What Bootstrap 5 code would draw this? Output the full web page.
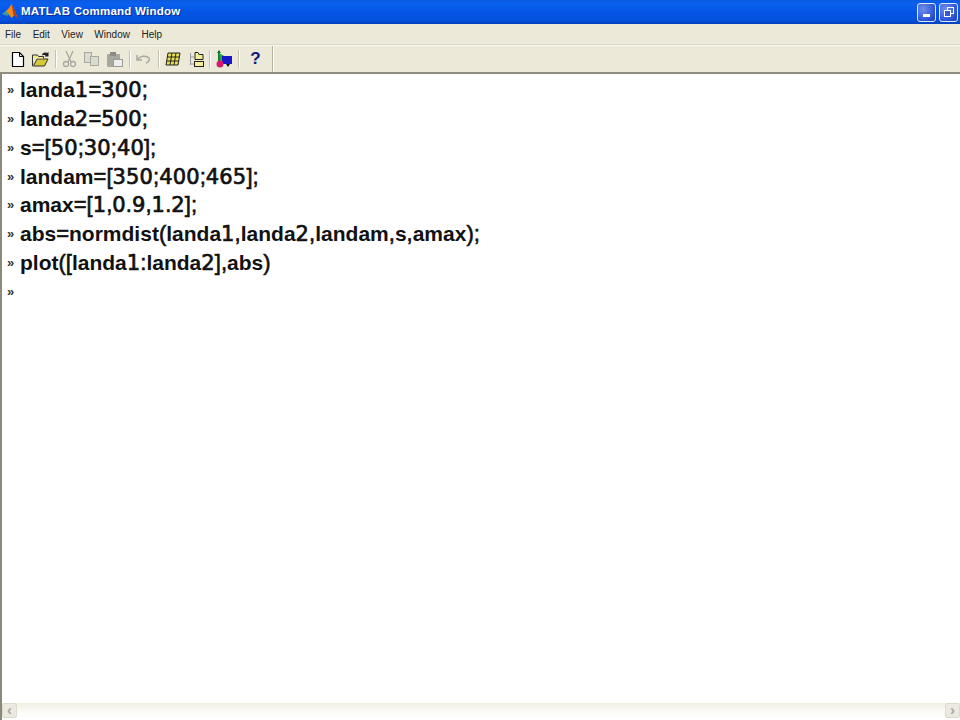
<!DOCTYPE html>
<html lang="en"><head><meta charset="utf-8"><title>MATLAB Command Window</title>
<link href="https://cdn.jsdelivr.net/npm/bootstrap@5.3.0/dist/css/bootstrap.min.css" rel="stylesheet">
<style>
html,body{height:720px;overflow:hidden;background:#fff;font-family:"Liberation Sans",Arial,sans-serif}
.win{height:720px;width:960px}
.titlebar{height:24px;flex:none;background:linear-gradient(180deg,#0a5ae0 0,#0a60ee 15%,#0455e6 50%,#0450dc 85%,#0340b8 100%);padding:0 2px 0 2px}
.titletext{font-size:11.5px;font-weight:700;color:#fff;letter-spacing:.25px;margin-left:3px;text-shadow:1px 1px 0 #0a2f90}
.capbtn{width:19px;height:19px;border:1px solid #dfe8fb;border-radius:3px;background:radial-gradient(circle at 30% 30%,#6f8fe8,#2a50d8 70%,#1c3cc0);margin-left:3px}
.menubar{height:20px;flex:none;background:#ece9d8;font-size:10px;color:#222;padding-left:5px}
.menubar span{margin-right:11.500px}
.sep-line{height:2px;flex:none;background:#fbfaf3;border-top:1px solid #d8d5c4}
.toolbar{height:28px;flex:none;background:#ece9d8;border-bottom:2px solid #8f8d80}
.tb-end{height:26px;border-right:1px solid #b5b3a4;box-shadow:1px 0 0 #fff;width:273px;padding-left:9px}
.ic{width:19px;height:20px;display:block;flex:none}
.ml3{margin-left:3px}
.ml5{margin-left:5px}
.tb-sep{width:1px;height:18px;background:#c4c2b2;box-shadow:1px 0 0 #fff;margin:0 4px 0 5px;flex:none}
.tb-sep.tight{margin-left:3px}
.help-q{color:#0a1a80;font:700 17px/20px "Liberation Sans",sans-serif;text-align:center;margin-left:3px}
.lower{flex:1;min-height:0;border-left:2px solid #8b897c}
.console{flex:1;padding-left:5px;min-height:0}
.cl{height:28.85px;line-height:29px;font-size:21px;font-weight:700;color:#111;white-space:nowrap;display:flex}
.cl:first-child{margin-top:1px}
.pr{width:13px;font-size:13px;font-weight:700;flex:none;color:#333}
.dg{font-family:"DejaVu Sans",sans-serif;font-size:21px;font-weight:400;letter-spacing:.15px;-webkit-text-stroke:.7px #111}
.pn{font-size:22px;font-weight:400;-webkit-text-stroke:.6px #111}
.hscroll{height:15px;background:linear-gradient(180deg,#f1f0e6,#fbfbf6 60%,#fff);flex:none;margin-bottom:2px}
.sbtn{width:15px;background:#eceae0;border:1px solid #dcdacd;border-radius:2px;color:#a9a89d;font-size:15px;line-height:11px;text-align:center;font-weight:700}
</style></head>
<body>
<div class="win d-flex flex-column">
 <div class="titlebar d-flex align-items-center">
  <svg width="16" height="16" viewBox="0 0 16 16"><path d="M0 10l4-3 3-3 2.500-4 3 6 3 8-3-3-3 3-2.500-3-3-2z" fill="#f08a1e"/><path d="M0 10l4-3 2 2 1.500 2-2 0 0 1-3-1z" fill="#3c9a9a"/><path d="M9.500 0l3 6 3 8-4-3z" fill="#b83c14"/></svg>
  <span class="titletext">MATLAB Command Window</span>
  <div class="ms-auto d-flex">
   <div class="capbtn d-flex align-items-end justify-content-center pb-1"><svg width="8" height="3"><rect width="7" height="3" fill="#fff"/></svg></div>
   <div class="capbtn d-flex align-items-center justify-content-center"><svg width="12" height="12" fill="none" stroke="#fff"><rect x="4.500" y="1.500" width="6" height="6"/><rect x="1.500" y="4.500" width="6" height="6" fill="#3458d8"/></svg></div>
  </div>
 </div>
 <div class="menubar d-flex align-items-center"><span>File</span><span>Edit</span><span>View</span><span>Window</span><span>Help</span></div>
 <div class="sep-line"></div>
 <div class="toolbar d-flex align-items-center">
  <div class="tb-end d-flex align-items-center">
   <svg class="ic" viewBox="0 0 19 20"><path d="M3.500 3.500h7l4 4v10h-11z" fill="#fff" stroke="#000" stroke-width="1.200"/><path d="M10.500 3.500v4h4" fill="none" stroke="#000"/></svg>
   <svg class="ic ml3" viewBox="0 0 19 20"><path d="M1.500 8v9h12l3.500-7H6l-3 6" fill="#d8c838" stroke="#333"/><path d="M1.500 9V6h5l1 1.500h5v2" fill="#f2e890" stroke="#333"/><path d="M11 6c1-2.500 3-3 5-2l1.500-1v4.500h-4l1-1c-1-.6-2-.6-3 0z" fill="#222"/></svg>
   <span class="tb-sep"></span>
   <svg class="ic" viewBox="0 0 19 20" fill="none" stroke="#a8a8a0" stroke-width="1.300"><path d="M6 2l5 11M13 2L8 13"/><circle cx="6" cy="15" r="2.500"/><circle cx="13" cy="15" r="2.500"/></svg>
   <svg class="ic ml3" viewBox="0 0 19 20" fill="#dcdbd0" stroke="#a8a8a0"><rect x="2.500" y="3.500" width="7" height="10"/><rect x="8.500" y="7.500" width="8" height="9"/></svg>
   <svg class="ic ms-1" viewBox="0 0 19 20"><rect x="2" y="5" width="13" height="13" rx="1" fill="#a8a8a0"/><rect x="5" y="3" width="6" height="4" fill="#8c8c86"/><rect x="8.500" y="10.500" width="9" height="7" fill="#eee" stroke="#9a9a92"/></svg>
   <span class="tb-sep"></span>
   <svg class="ic" viewBox="0 0 19 20" fill="none" stroke="#a8a8a0" stroke-width="1.500"><path d="M3 6v5h5M3.500 10.500C6 7 12 6 15 9c1 1.500 0 4-3 5"/></svg>
   <span class="tb-sep"></span>
   <svg class="ic" viewBox="0 0 19 20"><path d="M5 4h12l-2 12H3z" fill="#e8e050" stroke="#222"/><path d="M4.300 8h12M3.700 12h12M9 4L7 16M13 4l-2 12" stroke="#222"/></svg>
   <svg class="ic ml5" viewBox="0 0 19 20"><path d="M3.500 4v12M3.500 8H7M3.500 15H7" fill="none" stroke="#999"/><path d="M8 3.500h3l1 2h4v5H8z" fill="#f4ee9c" stroke="#222"/><rect x="7.500" y="12.500" width="9" height="5" fill="#f4ee9c" stroke="#222"/></svg>
   <span class="tb-sep tight"></span>
   <svg class="ic" viewBox="0 0 19 20"><path d="M5 2v10" stroke="#0a7a2a" stroke-width="2"/><path d="M3 4l2-3 2 3z" fill="#0a7a2a"/><path d="M5 4l7 4-6 5z" fill="#2aa040"/><rect x="8" y="7" width="10" height="8" fill="#1818c8"/><circle cx="6" cy="15" r="3.500" fill="#d81870"/><path d="M12 15h4l-2 3z" fill="#111"/></svg>
   <span class="tb-sep"></span>
   <span class="ic help-q">?</span>
  </div>
 </div>
 <div class="lower d-flex flex-column">
 <div class="console">
  <div class="cl"><span class="pr">»</span><span>landa<span class="dg">1</span><span class="pn">=</span><span class="dg">300</span><span class="pn">;</span></span></div>
  <div class="cl"><span class="pr">»</span><span>landa<span class="dg">2</span><span class="pn">=</span><span class="dg">500</span><span class="pn">;</span></span></div>
  <div class="cl"><span class="pr">»</span><span>s<span class="pn">=[</span><span class="dg">50</span><span class="pn">;</span><span class="dg">30</span><span class="pn">;</span><span class="dg">40</span><span class="pn">];</span></span></div>
  <div class="cl"><span class="pr">»</span><span>landam<span class="pn">=[</span><span class="dg">350</span><span class="pn">;</span><span class="dg">400</span><span class="pn">;</span><span class="dg">465</span><span class="pn">];</span></span></div>
  <div class="cl"><span class="pr">»</span><span>amax<span class="pn">=[</span><span class="dg">1</span><span class="pn">,</span><span class="dg">0</span><span class="pn">.</span><span class="dg">9</span><span class="pn">,</span><span class="dg">1</span><span class="pn">.</span><span class="dg">2</span><span class="pn">];</span></span></div>
  <div class="cl"><span class="pr">»</span><span>abs<span class="pn">=</span>normdist<span class="pn">(</span>landa<span class="dg">1</span><span class="pn">,</span>landa<span class="dg">2</span><span class="pn">,</span>landam<span class="pn">,</span>s<span class="pn">,</span>amax<span class="pn">);</span></span></div>
  <div class="cl"><span class="pr">»</span><span>plot<span class="pn">([</span>landa<span class="dg">1</span><span class="pn">:</span>landa<span class="dg">2</span><span class="pn">],</span>abs<span class="pn">)</span></span></div>
  <div class="cl"><span class="pr">»</span></div>
 </div>
 <div class="hscroll d-flex justify-content-between"><span class="sbtn">‹</span><span class="sbtn">›</span></div>
 </div>
</div>
<script src="https://cdn.jsdelivr.net/npm/bootstrap@5.3.0/dist/js/bootstrap.bundle.min.js"></script>
</body></html>
